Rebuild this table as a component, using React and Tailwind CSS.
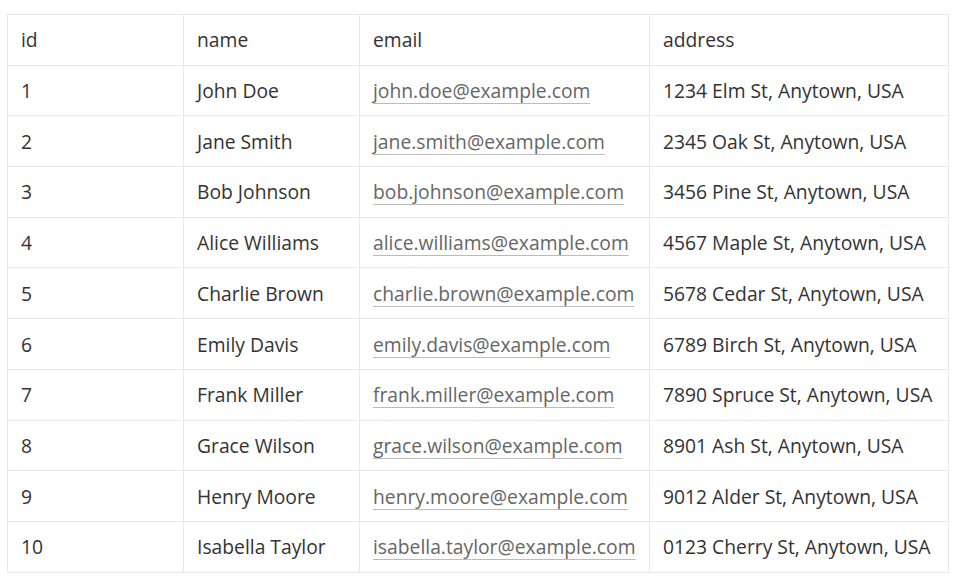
const rows = [
  ["1", "John Doe", "john.doe@example.com", "1234 Elm St, Anytown, USA"],
  ["2", "Jane Smith", "jane.smith@example.com", "2345 Oak St, Anytown, USA"],
  ["3", "Bob Johnson", "bob.johnson@example.com", "3456 Pine St, Anytown, USA"],
  ["4", "Alice Williams", "alice.williams@example.com", "4567 Maple St, Anytown, USA"],
  ["5", "Charlie Brown", "charlie.brown@example.com", "5678 Cedar St, Anytown, USA"],
  ["6", "Emily Davis", "emily.davis@example.com", "6789 Birch St, Anytown, USA"],
  ["7", "Frank Miller", "frank.miller@example.com", "7890 Spruce St, Anytown, USA"],
  ["8", "Grace Wilson", "grace.wilson@example.com", "8901 Ash St, Anytown, USA"],
  ["9", "Henry Moore", "henry.moore@example.com", "9012 Alder St, Anytown, USA"],
  ["10", "Isabella Taylor", "isabella.taylor@example.com", "0123 Cherry St, Anytown, USA"],
];

const cell = "border border-[#e8e8e8] h-[50.7px] px-[13px] pt-[2px] pb-0 align-middle text-left font-normal";

export default function App() {
  return (
    <div className="bg-white min-h-screen pt-[14px] px-[7px] text-[19.3px] text-[#333] [font-family:'Open_Sans',sans-serif]">
      <table className="border-collapse table-fixed w-[941px]">
        <colgroup>
          <col className="w-[176px]" />
          <col className="w-[176px]" />
          <col className="w-[290px]" />
          <col className="w-[299px]" />
        </colgroup>
        <thead>
          <tr>
            <th className={cell}>id</th>
            <th className={cell}>name</th>
            <th className={cell}>email</th>
            <th className={cell}>address</th>
          </tr>
        </thead>
        <tbody>
          {rows.map((r) => (
            <tr key={r[0]}>
              <td className={cell}>{r[0]}</td>
              <td className={cell}>{r[1]}</td>
              <td className={cell}>
                <a className="text-[#666] underline decoration-[#bbb] underline-offset-[5px]">{r[2]}</a>
              </td>
              <td className={cell + " whitespace-nowrap"}>{r[3]}</td>
            </tr>
          ))}
        </tbody>
      </table>
    </div>
  );
}
